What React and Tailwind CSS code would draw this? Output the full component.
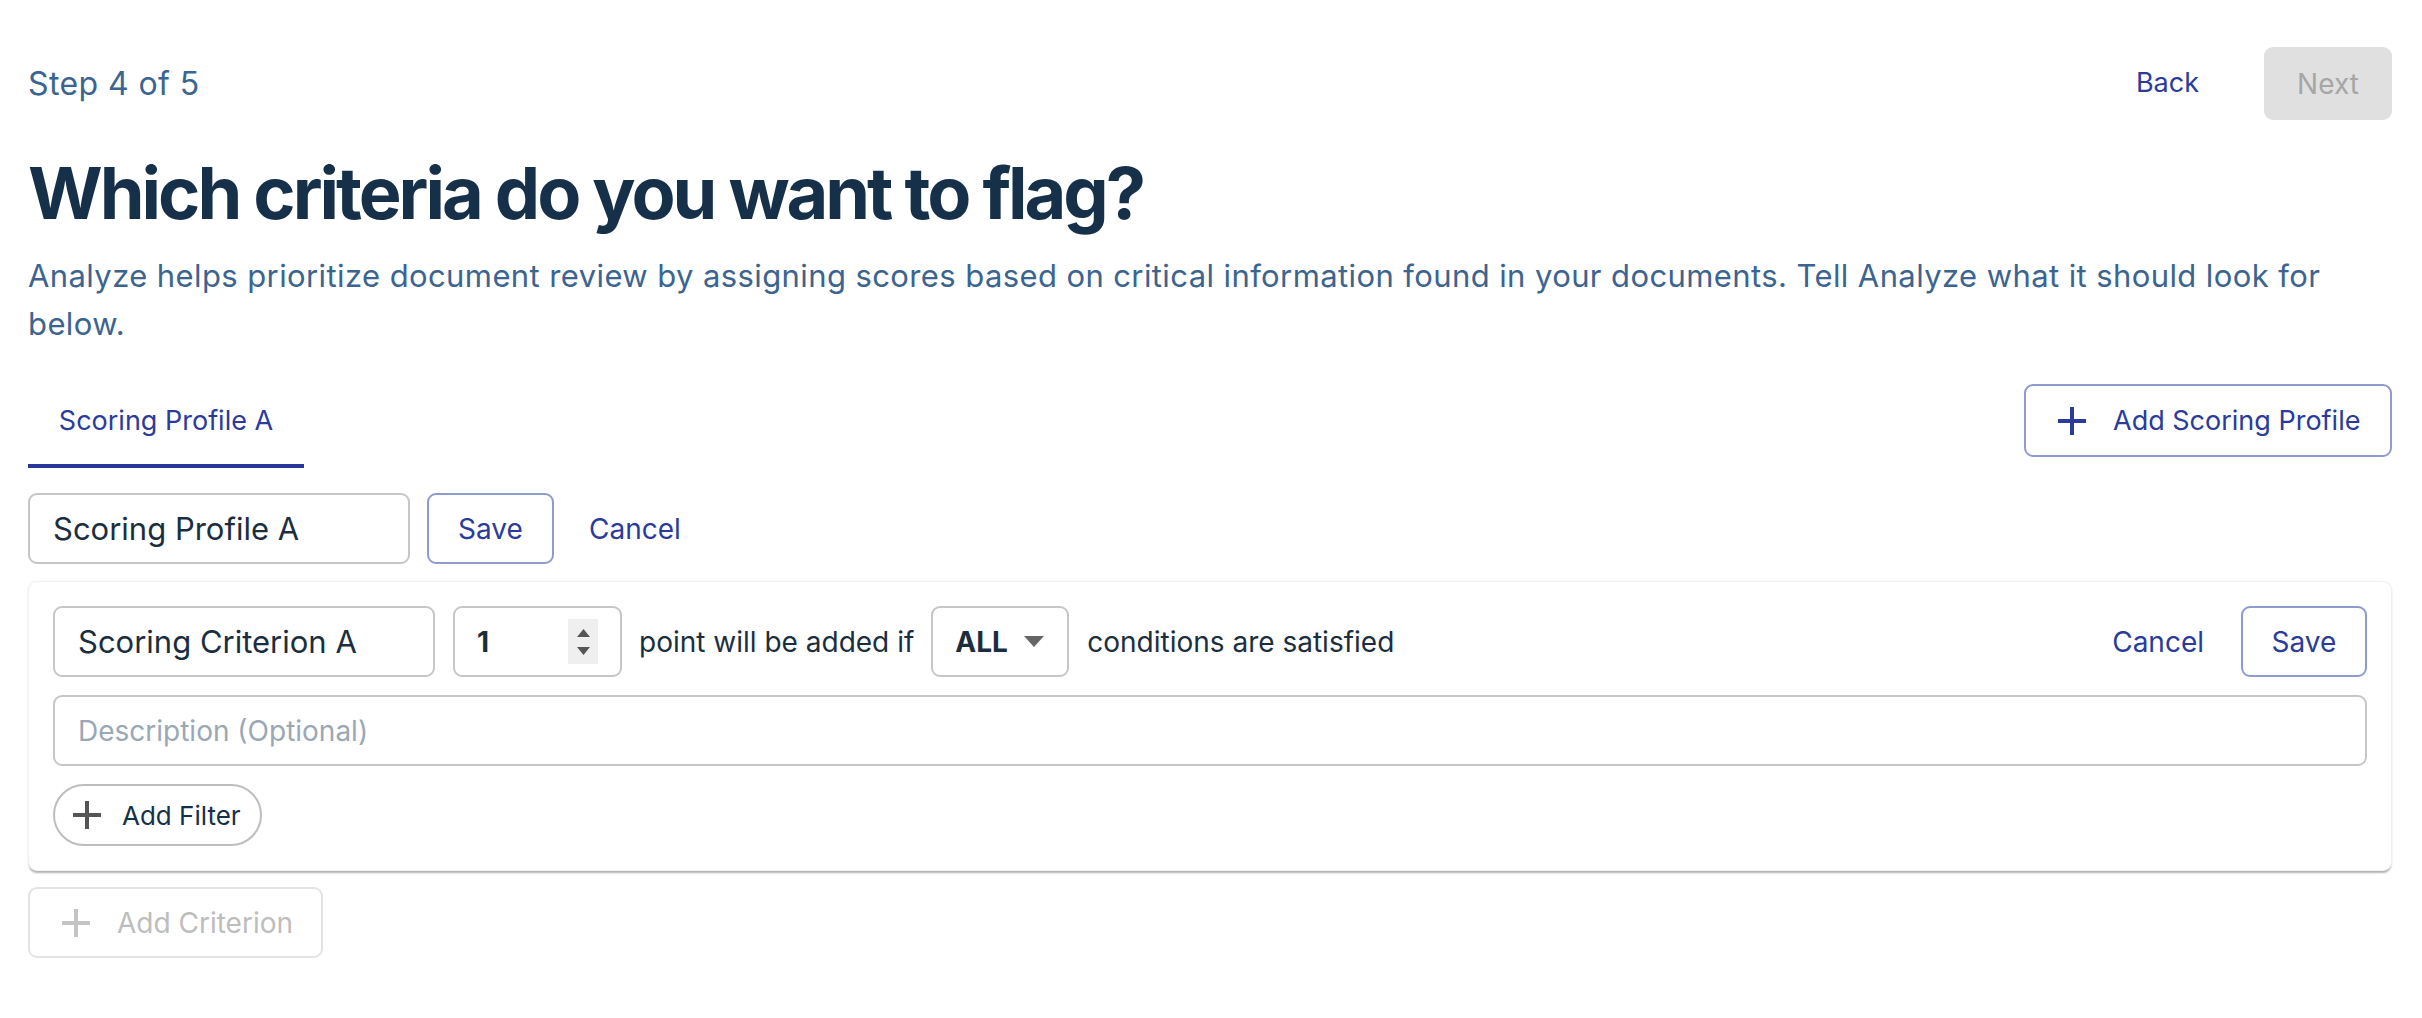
import React from 'react';

const font = "font-['Inter','Noto_Sans',sans-serif]";

const PlusIcon = ({ className = '', size = 28, stroke = 4 }) => (
  <svg width={size} height={size} viewBox="0 0 28 28" className={className} fill="none">
    <path d="M14 0v28M0 14h28" stroke="currentColor" strokeWidth={stroke} />
  </svg>
);

const Spinner = () => (
  <div className="flex h-[45px] w-[30px] flex-col items-center justify-center gap-[10px] bg-[#efefef]">
    <svg width="13" height="8" viewBox="0 0 13 8"><path d="M6.5 0L13 8H0z" fill="#555" /></svg>
    <svg width="13" height="8" viewBox="0 0 13 8"><path d="M0 0h13L6.5 8z" fill="#555" /></svg>
  </div>
);

const Caret = () => (
  <svg width="20" height="11" viewBox="0 0 20 11"><path d="M0 0h20L10 11z" fill="#666" /></svg>
);

const App = () => {
  return (
    <div className={`min-h-screen bg-white pl-[28px] pr-[30px] ${font}`}>
      {/* Header row */}
      <div className="mt-[47px] flex h-[73px] items-center justify-between">
        <span className="text-[32px] tracking-[0.4px] text-[#3b6490]">Step 4 of 5</span>
        <div className="flex items-center gap-[57px]">
          <button className="px-[8px] text-[27px] text-[#2a3b9b]">Back</button>
          <button className="h-[73px] w-[128px] rounded-[9px] bg-[#e0e0e0] text-[28px] text-[#a6a6a6]">Next</button>
        </div>
      </div>

      <h1 className="mt-[30px] text-[72px] font-bold leading-[1.2] tracking-[-3px] text-[#16304a]">
        Which criteria do you want to flag?
      </h1>
      <p className="mt-[16px] max-w-[2330px] text-[31px] leading-[48px] tracking-[0.4px] text-[#3b6490]">
        Analyze helps prioritize document review by assigning scores based on critical information found in your documents. Tell Analyze what it should look for below.
      </p>

      {/* Tabs */}
      <div className="mt-[36px] flex items-start justify-between">
        <div className="flex w-[276px] flex-col">
          <div className="flex h-[73px] items-center justify-center text-[27px] text-[#2a3b9b]">Scoring Profile A</div>
          <div className="mt-[7px] h-[4px] bg-[#27389a]" />
        </div>
        <button className="flex h-[73px] w-[368px] items-center gap-[27px] rounded-[9px] border-2 border-[#8e9bd0] pl-[32px] text-[27px] text-[#2a3b9b]">
          <PlusIcon />
          Add Scoring Profile
        </button>
      </div>

      {/* Profile name edit */}
      <div className="mt-[25px] flex items-center gap-[17px]">
        <input
          readOnly
          value="Scoring Profile A"
          className="h-[71px] w-[382px] rounded-[9px] border-2 border-[#c6c6c6] px-[23px] text-[31px] text-[#1a2e3f] outline-none"
        />
        <button className="h-[71px] w-[127px] rounded-[9px] border-2 border-[#8e9bd0] text-[28px] text-[#2a3b9b]">Save</button>
        <button className="px-[18px] text-[28px] text-[#2a3b9b]">Cancel</button>
      </div>

      {/* Criterion card */}
      <div className="mt-[17px] rounded-[9px] border border-[#f0f0f0] bg-white p-[24px] shadow-[0_3px_2px_-1px_rgba(0,0,0,0.28),0_1px_3px_rgba(0,0,0,0.06)]">
        <div className="flex items-center">
          <input
            readOnly
            value="Scoring Criterion A"
            className="h-[71px] w-[382px] rounded-[9px] border-2 border-[#c6c6c6] px-[23px] text-[31px] text-[#1a2e3f] outline-none"
          />
          <div className="ml-[18px] flex h-[71px] w-[169px] items-center justify-between rounded-[9px] border-2 border-[#c6c6c6] pl-[22px] pr-[22px]">
            <span className="text-[28px] font-bold text-[#1a2e3f]">1</span>
            <Spinner />
          </div>
          <span className="ml-[17px] text-[28px] text-[#1a2e3f]">point will be added if</span>
          <div className="ml-[17px] flex h-[71px] w-[138px] items-center gap-[16px] rounded-[9px] border-2 border-[#c6c6c6] pl-[22px]">
            <span className="text-[28px] font-bold text-[#1a2e3f]">ALL</span>
            <Caret />
          </div>
          <span className="ml-[18px] text-[28px] text-[#1a2e3f]">conditions are satisfied</span>
          <div className="ml-auto flex items-center gap-[19px]">
            <button className="px-[18px] text-[28px] text-[#2a3b9b]">Cancel</button>
            <button className="h-[71px] w-[126px] rounded-[9px] border-2 border-[#8e9bd0] text-[28px] text-[#2a3b9b]">Save</button>
          </div>
        </div>

        <input
          readOnly
          placeholder="Description (Optional)"
          className="mt-[18px] block h-[71px] w-full rounded-[9px] border-2 border-[#c6c6c6] px-[23px] text-[28px] text-[#1a2e3f] outline-none placeholder:text-[#9aa8b5]"
        />

        <button className="mt-[18px] flex h-[62px] w-[209px] items-center gap-[21px] rounded-full border-2 border-[#bdbdbd] pl-[18px] text-[26px] text-[#16304a]">
          <PlusIcon className="text-[#555]" />
          Add Filter
        </button>
      </div>

      <button className="mt-[16px] flex h-[71px] w-[295px] items-center gap-[27px] rounded-[9px] border-2 border-[#e3e3e3] pl-[32px] text-[28px] text-[#bdbdbd]">
        <PlusIcon className="text-[#c4c4c4]" />
        Add Criterion
      </button>
    </div>
  );
};

export default App;
